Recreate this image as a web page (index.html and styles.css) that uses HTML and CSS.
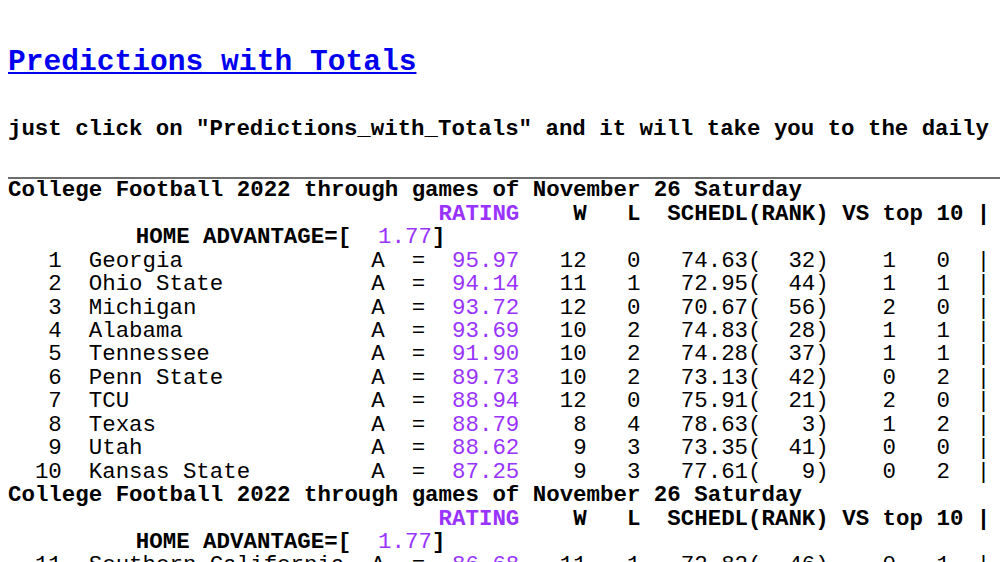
FILE: index.html
```html
<!DOCTYPE html>
<html lang="en">
<head>
<meta charset="utf-8">
<title>College Football 2022 Ratings</title>
<link rel="stylesheet" href="styles.css">
</head>
<body>
<div class="head"><a class="pred-link" href="#">Predictions_with_Totals</a></div>
<div class="note">just click on "Predictions_with_Totals" and it will take you to the daily predictions with totals</div>
<hr class="rule">
<pre class="table"><b>College Football 2022 through games of November 26 Saturday</b>
<b>                                <span class="r">RATING</span>    W   L  SCHEDL(RANK) VS top 10 |</b>
         <span class="half"><b>HOME ADVANTAGE=[</b>  <span class="r">1.77</span><b>]</b></span>
   1  Georgia              A  =  <span class="r">95.97</span>   12   0   74.63(  32)    1   0  |
   2  Ohio State           A  =  <span class="r">94.14</span>   11   1   72.95(  44)    1   1  |
   3  Michigan             A  =  <span class="r">93.72</span>   12   0   70.67(  56)    2   0  |
   4  Alabama              A  =  <span class="r">93.69</span>   10   2   74.83(  28)    1   1  |
   5  Tennessee            A  =  <span class="r">91.90</span>   10   2   74.28(  37)    1   1  |
   6  Penn State           A  =  <span class="r">89.73</span>   10   2   73.13(  42)    0   2  |
   7  TCU                  A  =  <span class="r">88.94</span>   12   0   75.91(  21)    2   0  |
   8  Texas                A  =  <span class="r">88.79</span>    8   4   78.63(   3)    1   2  |
   9  Utah                 A  =  <span class="r">88.62</span>    9   3   73.35(  41)    0   0  |
  10  Kansas State         A  =  <span class="r">87.25</span>    9   3   77.61(   9)    0   2  |
<b>College Football 2022 through games of November 26 Saturday</b>
<b>                                <span class="r">RATING</span>    W   L  SCHEDL(RANK) VS top 10 |</b>
         <span class="half"><b>HOME ADVANTAGE=[</b>  <span class="r">1.77</span><b>]</b></span>
  11  Southern California  A  =  <span class="r">86.68</span>   11   1   72.82(  46)    0   1  |
  12  Florida State        A  =  <span class="r">86.16</span>    9   3   71.55(  61)    0   2  |
</pre>
</body>
</html>
```

FILE: styles.css
```css
html {
  overflow: hidden;
  background: #ffffff;
}

body {
  margin: 8px;
  width: 1200px;
  font-family: "Liberation Mono", "DejaVu Sans Mono", monospace;
  color: #000000;
  white-space: nowrap;
}

.head {
  margin-top: 37px;
  font-size: 29.6px;
  font-weight: bold;
  line-height: normal;
}

.pred-link {
  color: #0000ee;
  text-decoration: underline;
  text-decoration-skip-ink: none;
}

.note {
  margin-top: 39px;
  font-size: 22.4px;
  line-height: 23.4px;
  font-weight: bold;
}

.rule {
  margin: 36px 0 0 0;
  height: 0;
  border: 0;
  border-top: 2px solid #6e6e6e;
}

.table {
  margin: 0;
  font-family: "Liberation Mono", "DejaVu Sans Mono", monospace;
  font-size: 22.43px;
  line-height: 23.44px;
  white-space: pre;
}

.r {
  color: #9933ff;
}

.half {
  margin-left: 0.5ch;
}
```
